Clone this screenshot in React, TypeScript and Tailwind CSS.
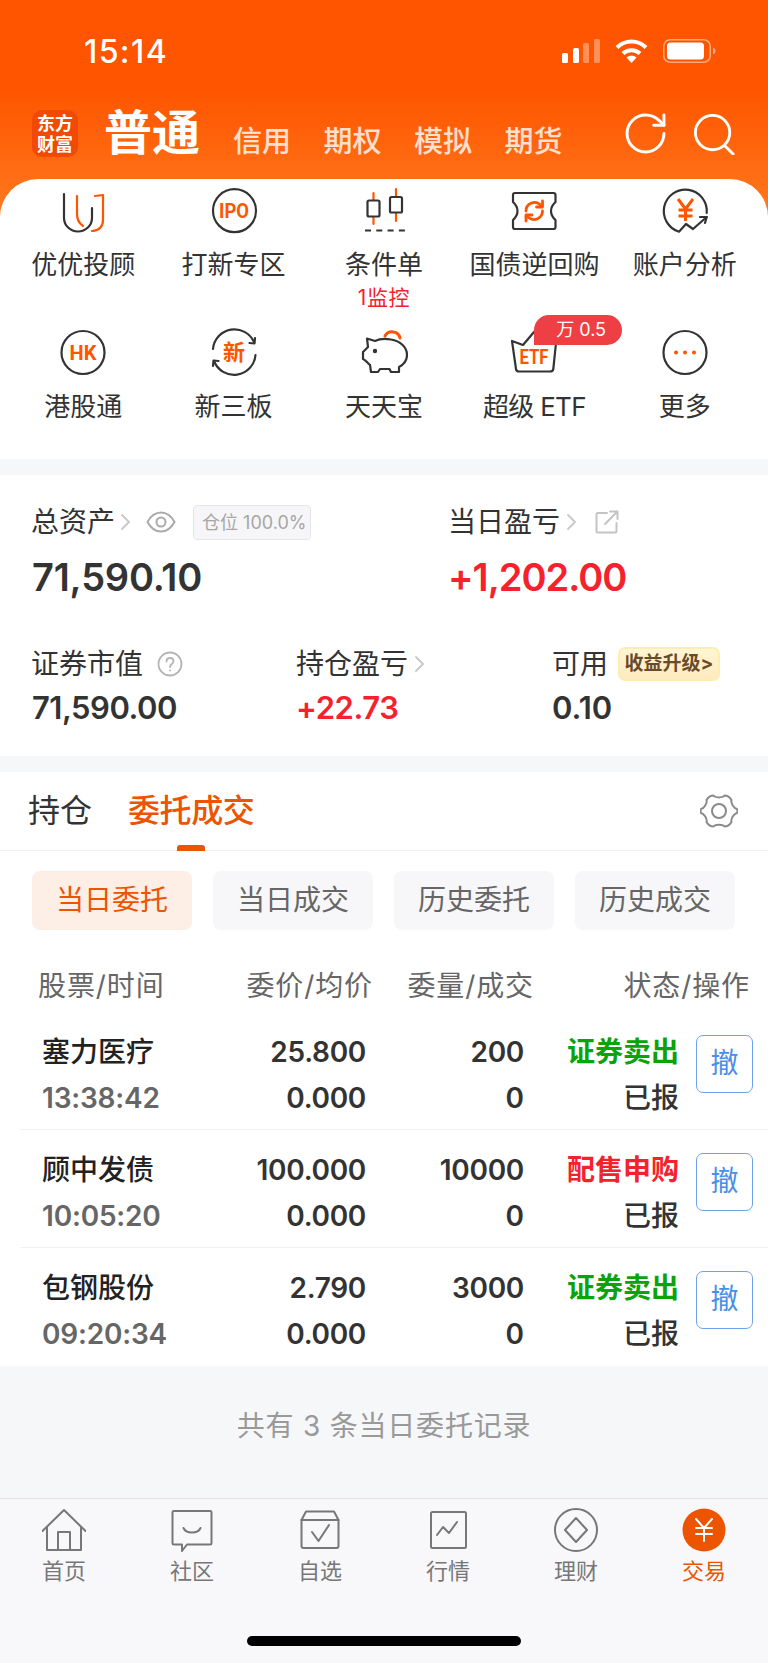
import React from "react";

const DARK = "#333333";
const ORANGE = "#ff5500";
const FONT = "font-['Inter','Noto_Sans_CJK_SC',sans-serif]";

type IconProps = { children: React.ReactNode };

// Shared 48px frame for the feature shortcuts
function Glyph({ children }: IconProps) {
  return (
    <svg width="48" height="48" viewBox="0 0 48 48" fill="none" strokeWidth="2.2" strokeLinecap="round" strokeLinejoin="round">
      {children}
    </svg>
  );
}

function GlyphText({ y = 31, size = 19, children, length }: { y?: number; size?: number; children: string; length?: number }) {
  return (
    <text
      x="24"
      y={y}
      textAnchor="middle"
      fill={ORANGE}
      stroke="none"
      fontSize={size}
      fontWeight="700"
      fontFamily="Roboto, 'Noto Sans CJK SC', sans-serif"
      textLength={length}
      lengthAdjust={length ? "spacingAndGlyphs" : undefined}
    >
      {children}
    </text>
  );
}

const AdvisorIcon = () => (
  <Glyph>
    <path d="M5 8V32a13.500 13 0 0 0 28 0V22" stroke={DARK} />
    <path d="M18 10V28Q18 36 24 40" stroke={ORANGE} />
    <path d="M36 10L44 9V34Q44 44 33 45" stroke={ORANGE} />
  </Glyph>
);

const IpoIcon = () => (
  <Glyph>
    <circle cx="24.500" cy="24.700" r="21.500" stroke={DARK} />
    <GlyphText y={31.500} size={20} length={30}>IPO</GlyphText>
  </Glyph>
);

const CandleIcon = () => (
  <Glyph>
    <path d="M13.500 7V38M36 3V35" stroke={ORANGE} />
    <rect x="7.500" y="14.500" width="12" height="16" rx="1.500" fill="#fff" stroke={DARK} />
    <rect x="30" y="11" width="12" height="15.500" rx="1.500" fill="#fff" stroke={DARK} />
    <path d="M5 44.500H45" stroke={DARK} strokeDasharray="6 5.300" strokeLinecap="butt" />
  </Glyph>
);

const TicketIcon = () => (
  <Glyph>
    <path d="M5 7H43.500Q45.500 7 45.500 9V16Q41 20 41 25Q41 30 45.500 34V41Q45.500 43 43.500 43H5Q3 43 3 41V34Q7.500 30 7.500 25Q7.500 20 3 16V9Q3 7 5 7Z" stroke={DARK} />
    <path d="M16 25a8.500 8.500 0 0 1 14-6.500l1.500 1.500M32.500 25a8.500 8.500 0 0 1-14 6.500l-1.500-1.500" stroke={ORANGE} strokeWidth="2.800" />
    <path d="M32.500 15V21H26.500M16 35V29H22" stroke={ORANGE} strokeWidth="2.800" />
  </Glyph>
);

const AccountIcon = () => (
  <Glyph>
    <path d="M45.700 27A21.500 21.500 0 1 0 18 45.700L25 38L32 43L45.700 31" stroke={DARK} />
    <path d="M39 31H45.700L44 37" stroke={DARK} />
    <path d="M17 13L24.500 23L32 13M24.500 23V35M17.500 24H31.500M17.500 30H31.500" stroke={ORANGE} strokeWidth="3" strokeLinecap="butt" strokeLinejoin="miter" />
  </Glyph>
);

const HkIcon = () => (
  <Glyph>
    <circle cx="24" cy="24.500" r="21.500" stroke={DARK} />
    <GlyphText y={31.500} size={20}>HK</GlyphText>
  </Glyph>
);

const NewBoardIcon = () => (
  <Glyph>
    <path d="M3 21A21.500 21.500 0 0 1 44 14" stroke={DARK} />
    <path d="M39.500 15L44.500 15.500L45 10" stroke={DARK} />
    <path d="M45.500 27A21.500 21.500 0 0 1 4 33" stroke={DARK} />
    <path d="M8.500 33L3.500 32.500L3 38" stroke={DARK} />
    <GlyphText y={32} size={22}>新</GlyphText>
  </Glyph>
);

const PiggyIcon = () => (
  <Glyph>
    <path d="M25 8A8 7.500 0 0 1 40 10" stroke={ORANGE} strokeWidth="3" />
    <path d="M8 19L7 10.500L15 13C20 10.500 26 10.500 31 11.500C40 13 47 19 47 27C47 33 43 37 39 39V44H31L29.500 41H20L18 44H11L10 37C7 35 6 32 3 31V24Z" stroke={DARK} />
    <circle cx="15" cy="23" r="2.200" fill={DARK} stroke="none" />
  </Glyph>
);

const EtfIcon = () => (
  <Glyph>
    <path d="M2 13L6 41Q6.300 43.500 9 43.500H40Q43 43.500 43.300 41L46 15M2 13L13 17L24 4" stroke={DARK} />
    <GlyphText y={36} size={20} length={29}>ETF</GlyphText>
  </Glyph>
);

const MoreIcon = () => (
  <Glyph>
    <circle cx="24" cy="24.500" r="21.500" stroke={DARK} />
    <circle cx="15" cy="24.500" r="2" fill={ORANGE} stroke="none" />
    <circle cx="24" cy="24.500" r="2" fill={ORANGE} stroke="none" />
    <circle cx="33" cy="24.500" r="2" fill={ORANGE} stroke="none" />
  </Glyph>
);

const shortcuts = [
  { label: "优优投顾", icon: <AdvisorIcon /> },
  { label: "打新专区", icon: <IpoIcon /> },
  { label: "条件单", icon: <CandleIcon />, note: "1监控" },
  { label: "国债逆回购", icon: <TicketIcon /> },
  { label: "账户分析", icon: <AccountIcon /> },
  { label: "港股通", icon: <HkIcon /> },
  { label: "新三板", icon: <NewBoardIcon /> },
  { label: "天天宝", icon: <PiggyIcon /> },
  { label: "超级 ETF", icon: <EtfIcon />, badge: "万 0.5", tight: true },
  { label: "更多", icon: <MoreIcon /> },
];

const orders = [
  { name: "塞力医疗", time: "13:38:42", price: "25.800", qty: "200", side: "证券卖出", sell: true },
  { name: "顾中发债", time: "10:05:20", price: "100.000", qty: "10000", side: "配售申购", sell: false },
  { name: "包钢股份", time: "09:20:34", price: "2.790", qty: "3000", side: "证券卖出", sell: true },
];

const Chevron = () => (
  <svg width="11" height="22" viewBox="0 0 11 22" fill="none" stroke="#c8c8c8" strokeWidth="1.800" strokeLinecap="round" strokeLinejoin="round">
    <path d="M2 4L9 11L2 18" />
  </svg>
);

function StatusBar() {
  return (
    <div className="h-[100px] pt-[39px] pl-[84px] pr-[52px] flex items-start text-white">
      <span className="mt-[1px] text-[32px] leading-[24px] font-medium tracking-[1.4px]">15:14</span>
      <div className="ml-auto flex items-start gap-[15px]">
        <svg width="38" height="24" viewBox="0 0 38 24" fill="#fff">
          <rect x="0" y="14" width="6" height="10" rx="1.500" />
          <rect x="11" y="9" width="6" height="15" rx="1.500" />
          <rect x="21" y="4" width="6" height="20" rx="1.500" opacity="0.35" />
          <rect x="32" y="0" width="6" height="24" rx="1.500" opacity="0.35" />
        </svg>
        <svg width="33" height="24" viewBox="0 0 33 24" fill="none" stroke="#fff" strokeWidth="4">
          <path d="M2 8.500C10 0.500 23 0.500 31 8.500" />
          <path d="M8 14.500C12.500 10 20.500 10 25 14.500" />
          <path d="M16.500 24L11.500 18.500C14 16 19 16 21.500 18.500Z" fill="#fff" stroke="none" />
        </svg>
        <svg width="53" height="24" viewBox="0 0 53 24" fill="none">
          <rect x="0.750" y="0.750" width="46.500" height="22.500" rx="6.500" stroke="#fff" strokeOpacity="0.5" strokeWidth="1.500" />
          <rect x="4" y="3.500" width="37" height="17" rx="3.500" fill="#fff" />
          <path d="M50 8.500C52 9.500 52.500 10.500 52.500 12C52.500 13.500 52 14.500 50 15.500Z" fill="#fff" fillOpacity="0.5" />
        </svg>
      </div>
    </div>
  );
}

function HeaderBar() {
  return (
    <div className="h-[79px] pl-[32px] pr-[33px] flex items-start text-white">
      <div className="mt-[10px] w-[46px] h-[47px] rounded-[10px] bg-[#f04a05] flex flex-col items-center justify-center text-[18px] leading-[21px] font-bold whitespace-nowrap">
        <span>东方</span>
        <span>财富</span>
      </div>
      <span className="ml-[26px] mt-[7px] text-[48px] leading-[52px] font-bold">普通</span>
      <div className="ml-[33px] mt-[26px] flex gap-[32.500px] text-[29px] leading-[32px] text-white/80 font-medium">
        <span>信用</span>
        <span>期权</span>
        <span>模拟</span>
        <span>期货</span>
      </div>
      <div className="ml-auto mt-[13px] flex items-start gap-[27px]">
        <svg width="41" height="41" viewBox="2 2 20 20" fill="none" stroke="#fff" strokeWidth="1.450" strokeLinecap="round" strokeLinejoin="round">
          <path d="M21 12a9 9 0 1 1-9-9c2.520 0 4.930 1 6.740 2.740L21 8" />
          <path d="M21 3v5h-5" />
        </svg>
        <svg width="42" height="42" viewBox="0 0 44 44" fill="none" stroke="#fff" strokeWidth="3" strokeLinecap="round">
          <circle cx="20.500" cy="20.500" r="18" />
          <path d="M33 34L42 43" />
        </svg>
      </div>
    </div>
  );
}

function Shortcuts() {
  return (
    <div className="h-[280px] rounded-t-[38px] bg-white px-2 pt-[7px] grid grid-cols-5 grid-rows-[142px_131px]">
      {shortcuts.map((item) => (
        <div key={item.label} className="relative flex flex-col items-center">
          {item.icon}
          <span className={item.tight ? "mt-[15px] text-[26px] leading-[32px] text-[#333333] whitespace-nowrap tracking-[-0.7px]" : "mt-[15px] text-[26px] leading-[32px] text-[#333333] whitespace-nowrap"}>
            {item.label}
          </span>
          {item.note && <span className="mt-[5px] text-[21px] leading-[24px] text-[#f5222d] tracking-[0.6px]">{item.note}</span>}
          {item.badge && (
            <span className="absolute left-[75px] top-[-13px] w-[88px] h-[30px] pl-[22px] rounded-[15px] rounded-bl-none bg-[#ee3f44] text-white text-[18px] leading-[30px] whitespace-nowrap">
              {item.badge}
            </span>
          )}
        </div>
      ))}
    </div>
  );
}

function Stats() {
  return (
    <section className="mt-[16px] h-[281px] bg-white px-[31px] pt-[29px]">
      <div className="grid grid-cols-[417px_1fr]">
        <div>
          <div className="h-[36px] flex items-center text-[28px] text-[#333333]">
            总资产
            <span className="ml-[5px]"><Chevron /></span>
            <svg className="ml-[15px]" width="30" height="22" viewBox="0 0 30 22" fill="none" stroke="#aaaaaa" strokeWidth="2">
              <path d="M1.500 11C5 4.500 9.500 1.500 15 1.500S25 4.500 28.500 11C25 17.500 20.500 20.500 15 20.500S5 17.500 1.500 11Z" />
              <circle cx="15" cy="11" r="4.500" />
            </svg>
            <span className="ml-[17px] w-[118px] h-[35px] rounded-[4px] border border-[#e6e6e8] bg-[#f6f6f8] text-[#a6a6a6] text-[18px] leading-[33px] pl-[8px] whitespace-nowrap">
              仓位 100.0%
            </span>
          </div>
          <div className="mt-[13.500px] text-[38px] leading-[46px] font-semibold text-[#333333] pl-[1px] tracking-[-0.2px]">71,590.10</div>
        </div>
        <div>
          <div className="h-[36px] flex items-center text-[28px] text-[#333333]">
            当日盈亏
            <span className="ml-[6px]"><Chevron /></span>
            <svg className="ml-[18px]" width="24" height="24" viewBox="0 0 24 24" fill="none" stroke="#c4c4c4" strokeWidth="2" strokeLinecap="round" strokeLinejoin="round">
              <path d="M12 3H3Q1.500 3 1.500 4.500V21Q1.500 22.500 3 22.500H20Q21.500 22.500 21.500 21V13" />
              <path d="M10 14L22 2M15 1.500H22.500V9" />
            </svg>
          </div>
          <div className="mt-[13.500px] text-[38px] leading-[46px] font-semibold text-[#f5222d] tracking-[-1px]">+1,202.00</div>
        </div>
      </div>
      <div className="mt-[46.500px] grid grid-cols-[265px_256px_1fr]">
        <div>
          <div className="h-[36px] flex items-center text-[28px] text-[#333333]">
            证券市值
            <svg className="ml-[14px]" width="26" height="26" viewBox="0 0 26 26" fill="none" stroke="#b4b4b4" strokeWidth="1.800" strokeLinecap="round">
              <circle cx="13" cy="13" r="11.500" />
              <path d="M9.500 10.500C9.500 8 11 7 13 7S16.500 8.300 16.500 10.300C16.500 13 13 13 13 16" />
              <path d="M13 19.300V19.500" />
            </svg>
          </div>
          <div className="mt-[6px] pl-[1px] text-[31px] leading-[40px] font-semibold text-[#333333] tracking-[-0.5px]">71,590.00</div>
        </div>
        <div>
          <div className="h-[36px] flex items-center text-[28px] text-[#333333]">
            持仓盈亏
            <span className="ml-[6px]"><Chevron /></span>
          </div>
          <div className="mt-[6px] text-[31px] leading-[40px] font-semibold text-[#f5222d] tracking-[-0.4px]">+22.73</div>
        </div>
        <div>
          <div className="h-[36px] flex items-center text-[28px] text-[#333333] whitespace-nowrap">
            可用
            <span className="ml-[10px] w-[102px] h-[34px] rounded-[7px] border-2 border-[#fdeeb0] bg-gradient-to-b from-[#fff6d2] to-[#fdeac0] text-[#6b4a2b] text-[19px] leading-[30px] font-bold text-center">
              收益升级&gt;
            </span>
          </div>
          <div className="mt-[6px] text-[31px] leading-[40px] font-semibold text-[#333333]">0.10</div>
        </div>
      </div>
    </section>
  );
}

function OrderTabs() {
  return (
    <div className="h-[79px] border-b border-[#f2f2f2] pl-[28px] pr-[30px] flex items-start">
      <span className="mt-[19px] text-[32px] leading-[40px] text-[#333333]">持仓</span>
      <span className="ml-[36px] mt-[19px] relative text-[32px] leading-[40px] font-medium text-[#ec5400] tracking-[-0.4px]">
        委托成交
        <i className="absolute left-[49px] top-[54px] w-[28px] h-[6px] rounded-t-[3px] bg-[#ec5400]" />
      </span>
      <svg className="ml-auto mt-[20px]" width="38" height="38" viewBox="0 0 38 38" fill="none" stroke="#8a8a8a" strokeWidth="2" strokeLinejoin="round">
        {/* six soft lobes around a centre ring */}
        <path d="M13.500 3.500C15.500 6 22.500 6 24.500 3.500C27 3.500 30 5.500 31.500 8C30.500 11 34 16.500 37 17C37.500 18 37.500 20 37 21C34 21.500 30.500 27 31.500 30C30 32.500 27 34.500 24.500 34.500C22.500 32 15.500 32 13.500 34.500C11 34.500 8 32.500 6.500 30C7.500 27 4 21.500 1 21C0.500 20 0.500 18 1 17C4 16.500 7.500 11 6.500 8C8 5.500 11 3.500 13.500 3.500Z" />
        <circle cx="19" cy="19" r="7" />
      </svg>
    </div>
  );
}

function Filters() {
  const items = ["当日委托", "当日成交", "历史委托", "历史成交"];
  return (
    <div className="pt-[20px] px-[32px] flex gap-[21px]">
      {items.map((label, i) => (
        <div
          key={label}
          className={
            i === 0
              ? "w-[160px] h-[59px] rounded-[8px] bg-[#fdeee6] text-[#ec5400] text-[28px] leading-[59px] text-center"
              : "w-[160px] h-[59px] rounded-[8px] bg-[#f7f7f9] text-[#666666] text-[28px] leading-[59px] text-center"
          }
        >
          {label}
        </div>
      ))}
    </div>
  );
}

function OrderTable() {
  return (
    <div>
      <div className="mt-[38px] h-[44px] pl-[38px] pr-[18px] grid grid-cols-[170px_165px_161px_216px] text-[28px] leading-[36px] text-[#666666] tracking-[0.9px] whitespace-nowrap">
        <span>股票/时间</span>
        <span className="text-right">委价/均价</span>
        <span className="text-right">委量/成交</span>
        <span className="text-right">状态/操作</span>
      </div>
      {orders.map((order, i) => (
        <div
          key={order.name}
          className={
            i < orders.length - 1
              ? "ml-[20px] h-[118px] pl-[22px] pt-[17px] border-b border-[#f2f2f2] grid grid-cols-[172px_152px_158px_155px_75px] grid-rows-[46px_46px] text-[28px] leading-[46px]"
              : "ml-[20px] h-[118px] pl-[22px] pt-[17px] grid grid-cols-[172px_152px_158px_155px_75px] grid-rows-[46px_46px] text-[28px] leading-[46px]"
          }
        >
          <span className="text-[#222222] font-medium">{order.name}</span>
          <span className="text-right text-[#333333] font-semibold tracking-[-0.3px]">{order.price}</span>
          <span className="text-right text-[#333333] font-semibold tracking-[-0.3px]">{order.qty}</span>
          <span className={order.sell ? "text-right text-[#0aa30a] font-bold" : "text-right text-[#f5222d] font-bold"}>{order.side}</span>
          <div className="row-span-2 ml-[17px] mt-[6px] w-[57px] h-[58px] rounded-[7px] border border-[#6ba4ec] text-[#4a8fe7] text-center leading-[54px]">撤</div>
          <span className="text-[#666666] font-semibold tracking-[-0.2px]">{order.time}</span>
          <span className="text-right text-[#333333] font-semibold tracking-[-0.3px]">0.000</span>
          <span className="text-right text-[#333333] font-semibold">0</span>
          <span className="text-right text-[#333333] font-medium">已报</span>
        </div>
      ))}
    </div>
  );
}

// Bottom navigation line icons, drawn at 44px
function NavIcon({ children }: IconProps) {
  return (
    <svg width="44" height="44" viewBox="0 0 44 44" fill="none" stroke="#777777" strokeWidth="2" strokeLinejoin="round" strokeLinecap="round">
      {children}
    </svg>
  );
}

const navItems = [
  {
    label: "首页",
    icon: (
      <NavIcon>
        <path d="M0.500 23L22 2L43.500 23" />
        <path d="M5 19V42H39V19" />
        <path d="M16 42V24H28V42" />
      </NavIcon>
    ),
  },
  {
    label: "社区",
    icon: (
      <NavIcon>
        <path d="M4 3H40Q41.500 3 41.500 4.500V35Q41.500 36.500 40 36.500H17L12 43V36.500H4Q2.500 36.500 2.500 35V4.500Q2.500 3 4 3Z" />
        <path d="M13.500 20C16 26 28 26 30.500 20" />
      </NavIcon>
    ),
  },
  {
    label: "自选",
    icon: (
      <NavIcon>
        <path d="M3.500 12V38Q3.500 40 5.500 40H38.500Q40.500 40 40.500 38V12Z" />
        <path d="M3.500 12L8 3.500H36L40.500 12" />
        <path d="M14 24L20.500 33L31 17" />
      </NavIcon>
    ),
  },
  {
    label: "行情",
    icon: (
      <NavIcon>
        <rect x="5" y="4" width="35" height="36" rx="1.500" />
        <path d="M11 27L17 19L23 25L31 14" />
      </NavIcon>
    ),
  },
  {
    label: "理财",
    icon: (
      <NavIcon>
        <circle cx="22" cy="22" r="21" />
        <path d="M22 10L33 22L22 34L11 22Z" />
      </NavIcon>
    ),
  },
  {
    label: "交易",
    active: true,
    icon: (
      <svg width="44" height="44" viewBox="0 0 44 44" fill="none">
        <circle cx="22" cy="22" r="21.500" fill="#ec5400" />
        <path d="M14 11L22 20L30 11M22 20V33M14 20H30M14 26H30" stroke="#fff" strokeWidth="2" strokeLinecap="round" strokeLinejoin="round" />
      </svg>
    ),
  },
];

function BottomNav() {
  return (
    <nav className="h-[165px] bg-[#f8f8fb] border-t border-[#e2e2e2] flex flex-col">
      <div className="grid grid-cols-6 pt-[9px]">
        {navItems.map((item) => (
          <div key={item.label} className="flex flex-col items-center">
            {item.icon}
            <span className={item.active ? "mt-[6px] text-[22px] leading-[26px] text-[#ec5400]" : "mt-[6px] text-[22px] leading-[26px] text-[#777777]"}>
              {item.label}
            </span>
          </div>
        ))}
      </div>
      <div className="mt-auto mb-[17px] mx-auto w-[274px] h-[10px] rounded-full bg-black" />
    </nav>
  );
}

export default function App() {
  return (
    <div className={`${FONT} w-[768px] h-[1663px] bg-[#f6f7f9] flex flex-col overflow-hidden`}>
      <div className="bg-[linear-gradient(180deg,#ff5500_0,#ff5500_90px,#ff7a1f_220px)]">
        <StatusBar />
        <HeaderBar />
        <Shortcuts />
      </div>
      <Stats />
      <section className="mt-[16px] bg-white">
        <OrderTabs />
        <Filters />
        <OrderTable />
      </section>
      <div className="flex-1 pt-[46px] text-center text-[28px] leading-[28px] text-[#999999] tracking-[0.8px]">共有 3 条当日委托记录</div>
      <BottomNav />
    </div>
  );
}
